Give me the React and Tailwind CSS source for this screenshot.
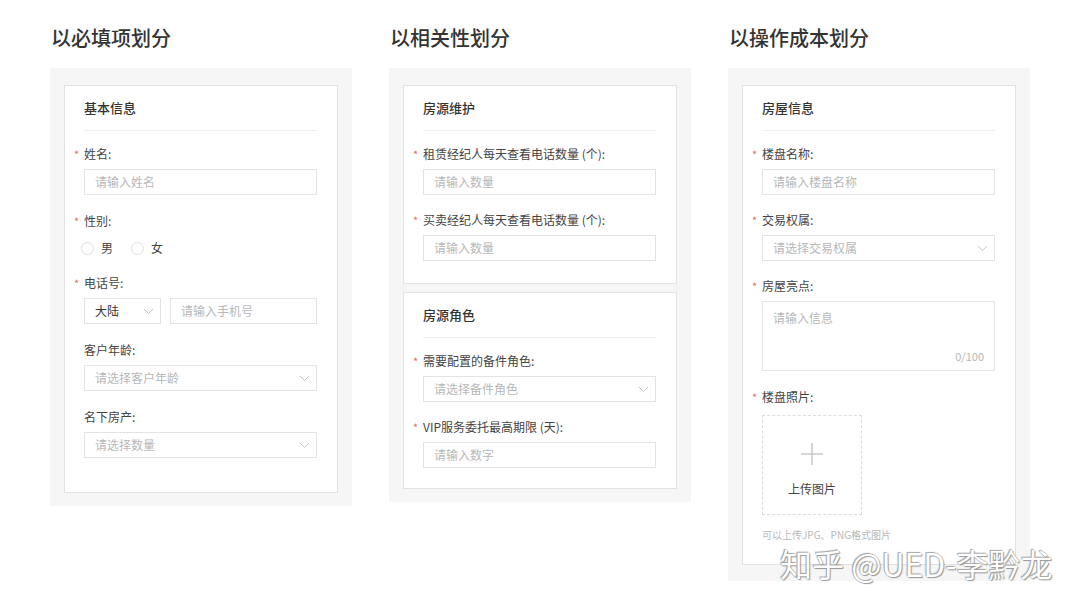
const font = { fontFamily: '"Noto Sans CJK SC", "Noto Sans", sans-serif' };

function Label({ text, required }) {
  return (
    <div className="flex h-4 items-center text-[12px] leading-4 text-[#444]">
      {required ? <span className="-ml-[10px] w-[10px] text-[11px] text-[#e46a6a]">*</span> : null}
      <span>{text}</span>
    </div>
  );
}

function Chevron() {
  return (
    <svg width="11" height="7" viewBox="0 0 11 7" fill="none" className="shrink-0">
      <path d="M1 1l4.5 4.5L10 1" stroke="#c4c4c4" strokeWidth="1" />
    </svg>
  );
}

function TextInput({ placeholder, className = "" }) {
  return (
    <div className={`flex h-[26px] items-center border border-[#e3e3e3] bg-white px-[10px] text-[12px] text-[#b8b8b8] ${className}`}>
      {placeholder}
    </div>
  );
}

function Select({ placeholder, value, className = "" }) {
  return (
    <div className={`flex h-[26px] items-center justify-between border border-[#e3e3e3] bg-white pl-[10px] pr-[6px] text-[12px] ${className}`}>
      <span className={value ? "text-[#333]" : "text-[#b8b8b8]"}>{value || placeholder}</span>
      <Chevron />
    </div>
  );
}

function Field({ label, required, children, mt = "mt-[18px]", gap = "pt-[7px]" }) {
  return (
    <div className={mt}>
      <Label text={label} required={required} />
      <div className={gap}>{children}</div>
    </div>
  );
}

function Card({ title, children, className = "" }) {
  return (
    <div className={`border border-[#e2e2e2] bg-white pl-[19px] pr-5 pt-[15px] ${className}`}>
      <div className="h-[14px] text-[13px] font-medium leading-[14px] text-[#333]">{title}</div>
      <div className="mt-[15px] h-px bg-[#efefef]" />
      <div className="mt-[15px]">{children}</div>
    </div>
  );
}

function Radio({ text }) {
  return (
    <div className="flex items-center gap-[7px] text-[12px] text-[#444]">
      <span className="h-[13px] w-[13px] rounded-full border border-[#e0e0e0]" />
      <span>{text}</span>
    </div>
  );
}

function Column({ title, children, pb = "pb-[13px]" }) {
  return (
    <div className="w-[302px] shrink-0">
      <h2 className="h-5 pl-px text-[20px] font-medium leading-5 text-[#333]">{title}</h2>
      <div className={`mt-[20px] bg-[#f6f6f6] px-[14px] pt-[17px] ${pb}`}>{children}</div>
    </div>
  );
}

export default function App() {
  return (
    <div className="relative h-[607px] w-[1080px] overflow-hidden bg-white" style={font}>
      <div className="flex gap-[37px] pl-[50px] pt-[28px]">
        <Column title="以必填项划分">
          <Card title="基本信息" className="pb-[34px]">
            <Field label="姓名:" required mt="mt-0">
              <TextInput placeholder="请输入姓名" />
            </Field>
            <div className="mt-[18px]">
              <Label text="性别:" required />
              <div className="-ml-[3px] mt-[11px] flex h-4 items-center gap-[18px]">
                <Radio text="男" />
                <Radio text="女" />
              </div>
            </div>
            <Field label="电话号:" required mt="mt-[19px]">
              <div className="flex gap-[9px]">
                <Select value="大陆" className="w-[77px]" />
                <TextInput placeholder="请输入手机号" className="flex-1" />
              </div>
            </Field>
            <Field label="客户年龄:">
              <Select placeholder="请选择客户年龄" />
            </Field>
            <Field label="名下房产:">
              <Select placeholder="请选择数量" />
            </Field>
          </Card>
        </Column>

        <Column title="以相关性划分">
          <Card title="房源维护" className="pb-[22px]">
            <Field label="租赁经纪人每天查看电话数量 (个):" required mt="mt-0">
              <TextInput placeholder="请输入数量" />
            </Field>
            <Field label="买卖经纪人每天查看电话数量 (个):" required mt="mt-[17px]">
              <TextInput placeholder="请输入数量" />
            </Field>
          </Card>
          <Card title="房源角色" className="mt-2 pb-[20px]">
            <Field label="需要配置的备件角色:" required mt="mt-0">
              <Select placeholder="请选择备件角色" />
            </Field>
            <Field label="VIP服务委托最高期限 (天):" required mt="mt-[17px]">
              <TextInput placeholder="请输入数字" />
            </Field>
          </Card>
        </Column>

        <Column title="以操作成本划分" pb="pb-[16px]">
          <Card title="房屋信息" className="pb-[23px]">
            <Field label="楼盘名称:" required mt="mt-0">
              <TextInput placeholder="请输入楼盘名称" />
            </Field>
            <Field label="交易权属:" required mt="mt-[17px]">
              <Select placeholder="请选择交易权属" />
            </Field>
            <Field label="房屋亮点:" required mt="mt-[17px]">
              <div className="flex h-[70px] flex-col justify-between border border-[#e3e3e3] px-[10px] pb-[6px] pt-[7px] text-[12px] text-[#b8b8b8]">
                <span>请输入信息</span>
                <span className="self-end text-[11px]">0/100</span>
              </div>
            </Field>
            <Field label="楼盘照片:" required mt="mt-[18px]" gap="pt-[10px]">
              <div className="flex h-[100px] w-[100px] flex-col items-center border border-dashed border-[#dcdcdc]">
                <svg width="22" height="22" viewBox="0 0 22 22" className="mt-[27px]">
                  <path d="M11 0v22M0 11h22" stroke="#c8c8c8" strokeWidth="1.5" />
                </svg>
                <span className="mt-[15px] text-[12px] text-[#444]">上传图片</span>
              </div>
            </Field>
            <div className="mt-[14px] text-[10px] leading-[12px] text-[#b8b8b8]">可以上传JPG、PNG格式图片</div>
          </Card>
        </Column>
      </div>

      <div className="absolute left-[780px] top-[544px] whitespace-nowrap text-[32px] leading-[38px] text-white [text-shadow:0_0_1px_#888,1px_1px_1px_#999,-1px_-1px_1px_#aaa]">
        知乎 @UED-李黔龙
      </div>
    </div>
  );
}
